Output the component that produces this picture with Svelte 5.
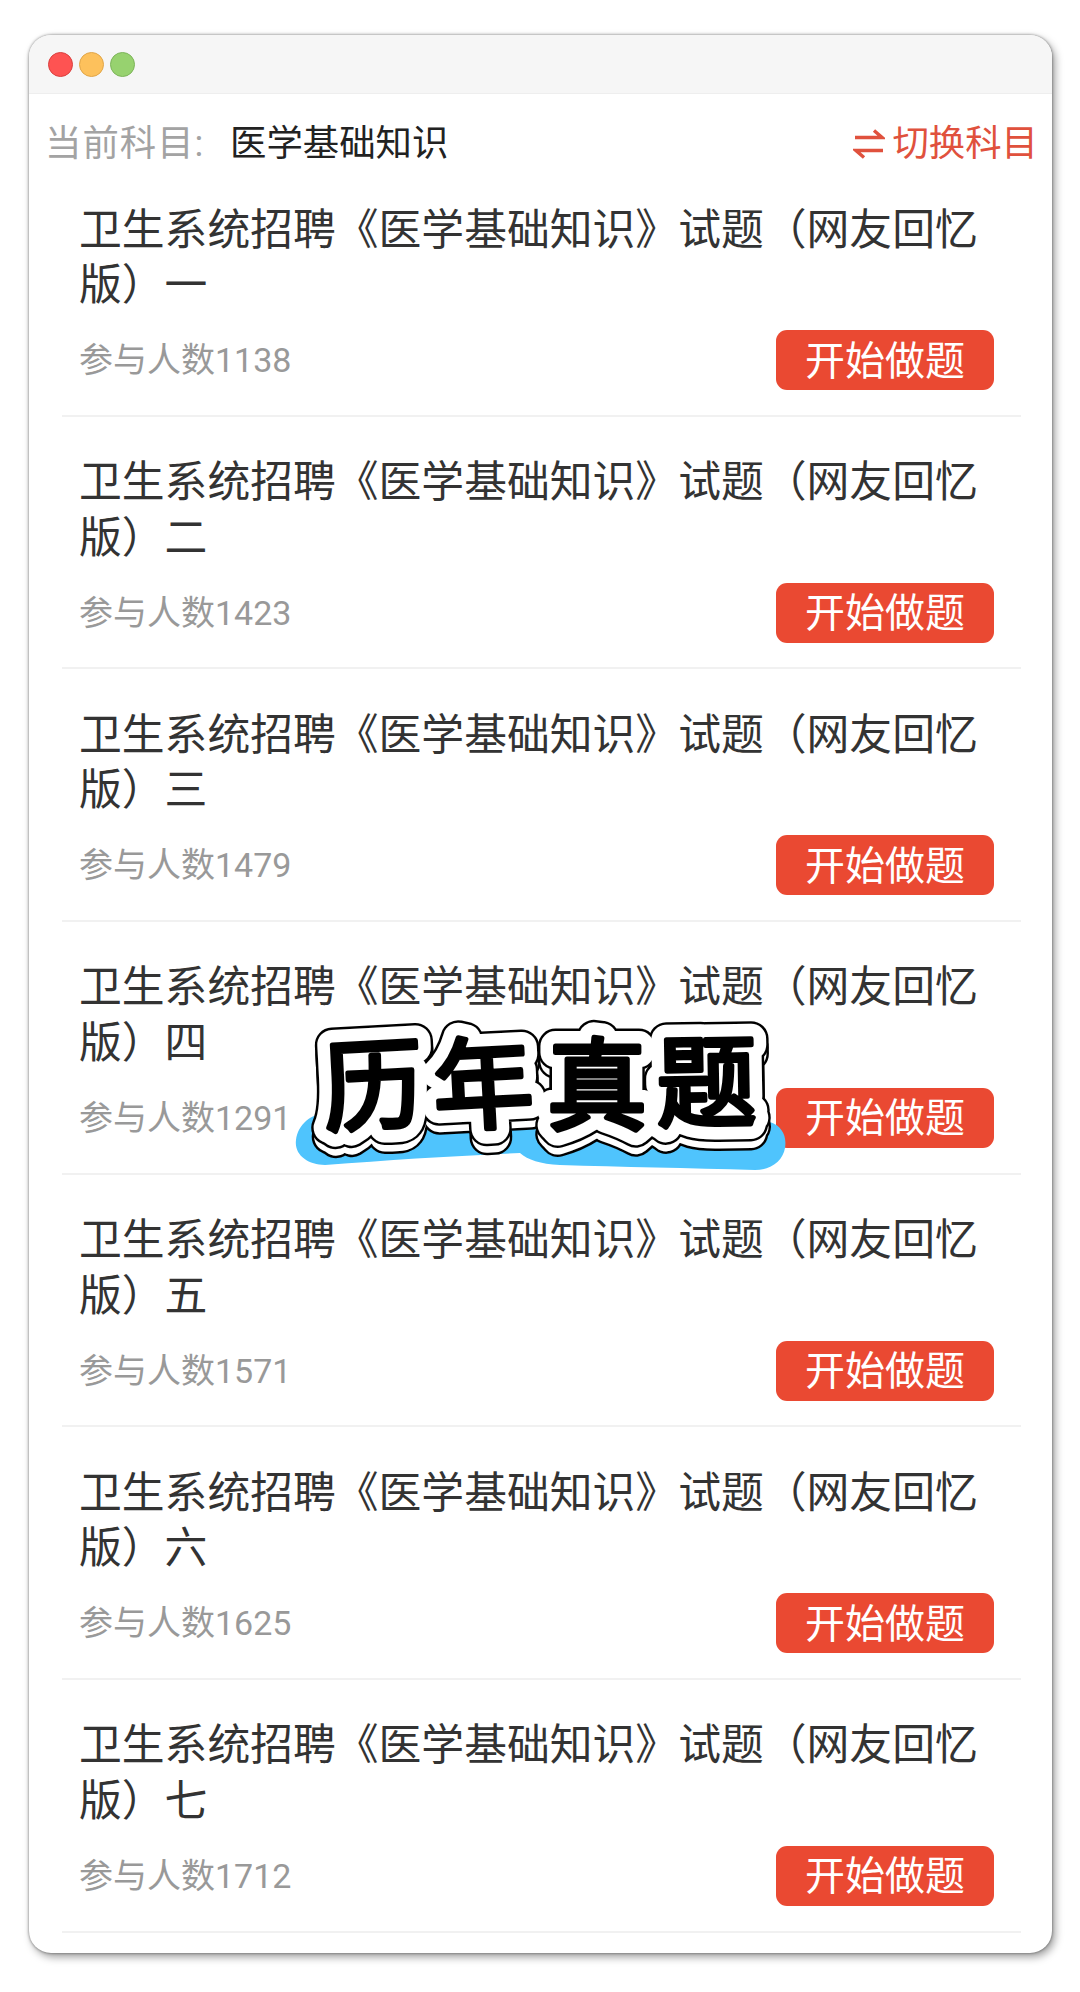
<script>
	const numerals = ['一', '二', '三', '四', '五', '六', '七'];
	const counts = [1138, 1423, 1479, 1291, 1571, 1625, 1712];
	const papers = numerals.map((n, i) => ({
		title: `卫生系统招聘《医学基础知识》试题（网友回忆版）${n}`,
		count: counts[i]
	}));

	const glyphs = [
		{ char: '历', x: 375, y: 1122, rot: -3 },
		{ char: '年', x: 485, y: 1121, rot: -3 },
		{ char: '真', x: 597, y: 1122, rot: 0 },
		{ char: '题', x: 707, y: 1119, rot: -1 }
	];
	const layers = [
		{ cls: 'edge', dy: 9 },
		{ cls: 'halo', dy: 9 },
		{ cls: 'edge', dy: 0 },
		{ cls: 'halo', dy: 0 },
		{ cls: 'ink', dy: 0 }
	];
</script>

<div class="page">
	<div class="window">
		<div class="titlebar">
			<span class="dot red"></span>
			<span class="dot yellow"></span>
			<span class="dot green"></span>
		</div>

		<div class="subject">
			<span class="label">当前科目:</span>
			<span class="current">医学基础知识</span>
			<span class="switch">
				<svg width="32" height="32" viewBox="0 0 32 32" fill="none" stroke="#e0513d" stroke-width="3.4">
					<path d="M2 9.5h27l-8-7" />
					<path d="M30 22.5H3l8 7" />
				</svg>
				切换科目
			</span>
		</div>

		<ul class="list">
			{#each papers as paper}
				<li>
					<p class="title">{paper.title}</p>
					<div class="meta">
						<span class="count">参与人数{paper.count}</span>
						<span class="start">开始做题</span>
					</div>
				</li>
			{/each}
		</ul>
	</div>

	<svg class="sticker" width="1080" height="1992" viewBox="0 0 1080 1992">
		<path
			fill="#4fc4fd"
			d="M296 1140C298 1124 312 1112 330 1113L770 1122C782 1126 787 1136 785 1148C783 1160 772 1170 755 1170C690 1168 620 1167 560 1165C540 1164 528 1160 520 1153C450 1156 390 1160 325 1165C308 1165 294 1155 296 1140Z"
		/>
		{#each layers as layer}
			{#each glyphs as g}
				<text
					class={layer.cls}
					x={g.x}
					y={g.y + layer.dy}
					text-anchor="middle"
					transform="rotate({g.rot} {g.x} {g.y})">{g.char}</text>
			{/each}
		{/each}
	</svg>
</div>

<style>
	:global(body) {
		margin: 0;
		background: #fff;
		font-family: Roboto, 'Noto Sans CJK SC', sans-serif;
	}

	.page {
		position: relative;
		height: 1992px;
		padding: 35px 28px 0 29px;
		box-sizing: border-box;
		overflow: hidden;
	}

	.window {
		height: 1918px;
		border-radius: 22px;
		background: #fff;
		overflow: hidden;
		box-shadow:
			0 0 3px rgba(0, 0, 0, 0.5),
			3px 4px 8px rgba(0, 0, 0, 0.38);
	}

	.titlebar {
		display: flex;
		align-items: center;
		gap: 6px;
		height: 59px;
		padding-left: 19px;
		background: #f6f6f6;
		border-bottom: 1px solid #eeeeee;
		box-sizing: border-box;
	}

	.dot {
		width: 25px;
		height: 25px;
		border-radius: 50%;
		box-sizing: border-box;
		border: 1px solid;
	}

	.red {
		background: #fe5352;
		border-color: #d9403f;
	}

	.yellow {
		background: #fdc15c;
		border-color: #e0a548;
	}

	.green {
		background: #97d26f;
		border-color: #7db45a;
	}

	.subject {
		display: flex;
		align-items: center;
		height: 41px;
		margin-top: 28px;
		padding: 2px 14px 0 16px;
		box-sizing: border-box;
		font-size: 36.4px;
		line-height: 41px;
	}

	.label {
		color: #a3a3a3;
		width: 185px;
		flex-shrink: 0;
		letter-spacing: 1px;
	}

	.current {
		color: #222;
	}

	.switch {
		display: flex;
		align-items: center;
		gap: 7px;
		margin-left: auto;
		color: #e0513d;
	}

	.list {
		list-style: none;
		margin: 1px 0 0;
		padding: 0 31px 0 33px;
	}

	li {
		height: 252.67px;
		box-sizing: border-box;
		padding: 38.5px 27px 0 17px;
		border-bottom: 2px solid #f1f1f1;
	}

	.title {
		margin: 0;
		font-size: 42.8px;
		line-height: 55.5px;
		color: #333;
	}

	.meta {
		display: flex;
		align-items: center;
		justify-content: space-between;
		margin-top: 16.5px;
	}

	.count {
		padding-bottom: 5px;
		font-size: 34px;
		color: #999;
	}

	.start {
		display: flex;
		align-items: center;
		justify-content: center;
		width: 218px;
		height: 60px;
		padding-bottom: 5px;
		box-sizing: border-box;
		border-radius: 11px;
		background: #ea4932;
		color: #fff;
		font-size: 40px;
	}

	.sticker {
		position: absolute;
		left: 0;
		top: 0;
		pointer-events: none;
	}

	.sticker text {
		font-family: 'Noto Sans CJK SC', sans-serif;
		font-size: 100px;
		font-weight: 400;
		stroke-linejoin: round;
		stroke-linecap: round;
	}

	.sticker .edge {
		fill: #000;
		stroke: #000;
		stroke-width: 35px;
	}

	.sticker .halo {
		fill: #fff;
		stroke: #fff;
		stroke-width: 30px;
	}

	.sticker .ink {
		fill: #000;
		stroke: #000;
		stroke-width: 5px;
	}
</style>
